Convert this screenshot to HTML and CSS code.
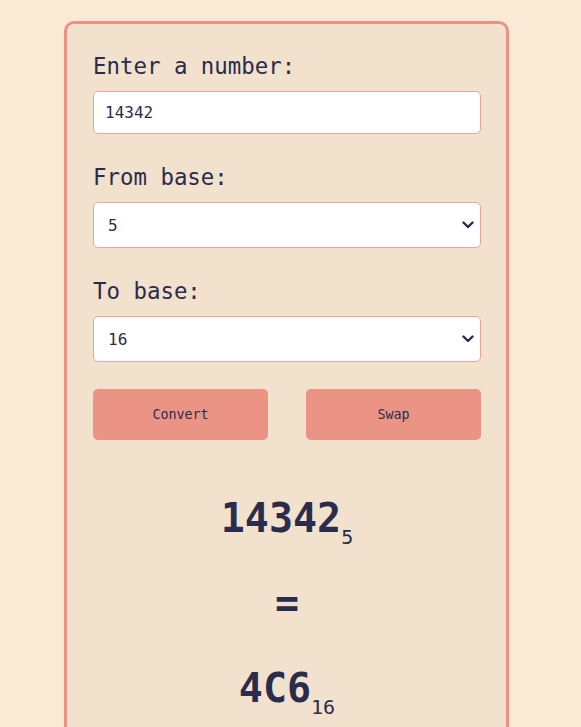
FILE: index.html
```html
<!DOCTYPE html>
<html lang="en">
<head>
<meta charset="utf-8">
<title>Base Converter</title>
<link rel="stylesheet" href="styles.css">
</head>
<body>
<main class="card">
  <div class="field">
    <label class="label" for="num">Enter a number:</label>
    <input class="input" id="num" type="text" value="14342">
  </div>
  <div class="field">
    <label class="label" for="from">From base:</label>
    <div class="select-wrap">
      <select class="select" id="from">
        <option>2</option><option>3</option><option>4</option>
        <option selected>5</option><option>8</option><option>10</option><option>16</option>
      </select>
      <svg class="chevron" width="12" height="8" viewBox="0 0 12 8" aria-hidden="true"><path d="M1.5 1.5 L6 6 L10.5 1.5" fill="none" stroke="#2a2c4d" stroke-width="2.4" stroke-linecap="round" stroke-linejoin="round"/></svg>
    </div>
  </div>
  <div class="field">
    <label class="label" for="to">To base:</label>
    <div class="select-wrap">
      <select class="select" id="to">
        <option>2</option><option>3</option><option>4</option>
        <option>5</option><option>8</option><option>10</option><option selected>16</option>
      </select>
      <svg class="chevron" width="12" height="8" viewBox="0 0 12 8" aria-hidden="true"><path d="M1.5 1.5 L6 6 L10.5 1.5" fill="none" stroke="#2a2c4d" stroke-width="2.4" stroke-linecap="round" stroke-linejoin="round"/></svg>
    </div>
  </div>
  <div class="actions">
    <button class="btn" type="button">Convert</button>
    <button class="btn" type="button">Swap</button>
  </div>
  <div class="result">
    <div class="result-line">14342<sub class="base">5</sub></div>
    <div class="result-line">=</div>
    <div class="result-line">4C6<sub class="base">16</sub></div>
  </div>
</main>
</body>
</html>
```
FILE: styles.css
```css
html, body {
  margin: 0;
  padding: 0;
}
body {
  background: #fae9d5;
  font-family: "DejaVu Sans Mono", "Liberation Mono", monospace;
  color: #2a2c4d;
}
.card {
  box-sizing: border-box;
  width: 445px;
  margin: 21px 0 0 64px;
  padding: 29px 25px 40px 26px;
  background: #f2e1cc;
  border: 3px solid #ea9385;
  border-radius: 10px;
  display: flex;
  flex-direction: column;
  gap: 30px;
}
.field {
  display: flex;
  flex-direction: column;
  gap: 12px;
}
.label {
  font-size: 22.4px;
  line-height: 26px;
  color: #2a2c4d;
}
.input,
.select {
  box-sizing: border-box;
  width: 100%;
  border: 1px solid #f3a29d;
  border-radius: 5px;
  background: #ffffff;
  color: #2a2c4d;
  font-family: "DejaVu Sans Mono", "Liberation Mono", monospace;
  font-size: 16px;
  outline: none;
}
.input {
  height: 43px;
  padding: 0 11px;
}
.select-wrap {
  position: relative;
}
.select {
  display: block;
  height: 46px;
  padding: 0 30px 0 14px;
  appearance: none;
  -webkit-appearance: none;
}
.chevron {
  position: absolute;
  right: 7px;
  top: 19px;
  pointer-events: none;
}
.actions {
  margin-top: -3px;
  display: flex;
  justify-content: space-between;
}
.btn {
  width: 175px;
  height: 51px;
  border: none;
  border-radius: 5px;
  background: #eb9486;
  color: #2a2c4d;
  font-family: "DejaVu Sans Mono", "Liberation Mono", monospace;
  font-size: 13.33px;
}
.result {
  margin-top: 6px;
  display: flex;
  flex-direction: column;
  align-items: center;
}
.result-line {
  font-size: 40px;
  font-weight: bold;
  line-height: 85px;
}
.base {
  font-size: 20px;
  font-weight: normal;
  line-height: 1;
  vertical-align: -12px;
}
```
